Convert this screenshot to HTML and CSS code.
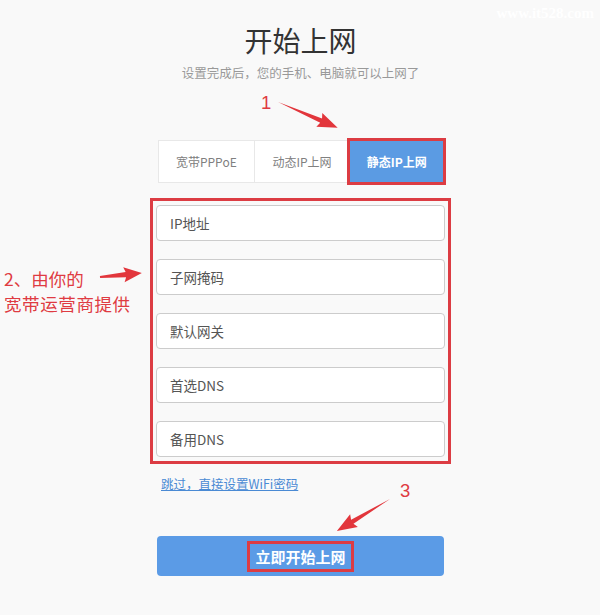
FILE: index.html
```html
<!DOCTYPE html>
<html lang="zh">
<head>
<meta charset="utf-8">
<title>开始上网</title>
<link rel="stylesheet" href="styles.css">
</head>
<body>
<div class="page">
  <div class="watermark">www.it528.com</div>
  <div class="column">
    <h1 class="title">开始上网</h1>
    <p class="subtitle">设置完成后，您的手机、电脑就可以上网了</p>
    <div class="tabs">
      <div class="tab">宽带PPPoE</div>
      <div class="tab">动态IP上网</div>
      <div class="tab tab-active">静态IP上网</div>
    </div>
    <div class="fields">
      <div class="field">IP地址</div>
      <div class="field">子网掩码</div>
      <div class="field">默认网关</div>
      <div class="field">首选DNS</div>
      <div class="field">备用DNS</div>
    </div>
    <a class="skip" href="#">跳过，直接设置WiFi密码</a>
    <div class="submit"><span class="submit-label">立即开始上网</span></div>
  </div>

  <div class="note note-1">1</div>
  <div class="note note-2"><div>2、由你的</div><div>宽带运营商提供</div></div>
  <div class="note note-3">3</div>
  <svg class="arrows" width="600" height="615" viewBox="0 0 600 615">
    <g fill="#e2363c">
      <polygon transform="translate(278,102) rotate(23.4)" points="0,0 47,-2.3 45,-7.5 65,0 45,7.5 47,2.3"/>
      <polygon transform="translate(100,277) rotate(-5.4)" points="0,-1 26,-2.6 24,-7.5 42,0 24,7.5 26,2.6 0,1"/>
      <polygon transform="translate(390,499) rotate(149)" points="0,0 44,-2.3 42,-7.5 62,0 42,7.5 44,2.3"/>
    </g>
  </svg>
</div>
</body>
</html>
```

FILE: styles.css
```css
* { box-sizing: border-box; }

html, body {
  margin: 0;
  padding: 0;
  background: #f9f9f9;
}

body {
  font-family: "Noto Sans CJK SC", "Noto Sans", sans-serif;
  color: #333;
}

.page {
  position: relative;
  width: 600px;
  height: 615px;
  overflow: hidden;
}

.watermark {
  position: absolute;
  right: 6px;
  top: 5px;
  font-family: "Liberation Serif", serif;
  font-size: 15px;
  font-weight: bold;
  color: #ffffff;
}

.column {
  width: 289px;
  margin-left: 156px;
  padding-top: 20px;
  display: flex;
  flex-direction: column;
}

.title {
  margin: 0;
  font-size: 28px;
  line-height: 40px;
  font-weight: normal;
  text-align: center;
  color: #333;
}

.subtitle {
  margin: 3px -20px 0;
  font-size: 12.5px;
  line-height: 20px;
  text-align: center;
  color: #999;
}

.tabs {
  margin: 57px 1px 0 2px;
  height: 43px;
  display: flex;
  background: #fff;
  border: 1px solid #e8e8e8;
}

.tab {
  flex: 1;
  display: flex;
  align-items: center;
  justify-content: center;
  font-size: 12px;
  color: #808080;
  border-left: 1px solid #e8e8e8;
}

.tab:first-child { border-left: 0; }

.tab-active {
  margin: -1px -1px -1px 0;
  background: #5b9be3;
  color: #fff;
  font-weight: bold;
  border-left: 0;
  outline: 3px solid #dc3c43;
  outline-offset: -1px;
}

.fields {
  margin: 15px -6px 0;
  padding: 4px 3px 4px;
  border: 3px solid #dc3c43;
  display: flex;
  flex-direction: column;
  gap: 18px;
}

.field {
  height: 36px;
  background: #fff;
  border: 1px solid #cccccc;
  border-radius: 4px;
  padding-left: 13px;
  display: flex;
  align-items: center;
  font-size: 13.5px;
  color: #555;
}

.skip {
  align-self: flex-start;
  margin: 10px 0 0 5px;
  font-size: 12.5px;
  line-height: 20px;
  color: #4a8ad4;
  text-decoration: underline;
}

.submit {
  margin: 42px 1px 0 1px;
  height: 40px;
  background: #5b9be6;
  border-radius: 4px;
  display: flex;
  align-items: center;
  justify-content: center;
}

.submit-label {
  padding: 0 5px;
  height: 31px;
  display: flex;
  align-items: center;
  font-size: 15px;
  font-weight: bold;
  color: #fff;
  border: 3px solid #dc3c43;
}

.note {
  position: absolute;
  color: #df3b42;
  font-size: 18.5px;
  line-height: 23px;
}

.note-1 {
  left: 261px;
  top: 91px;
  font-family: "Liberation Sans", sans-serif;
}

.note-2 {
  left: 4px;
  top: 266px;
  font-size: 17.5px;
  line-height: 25px;
  display: flex;
  flex-direction: column;
}

.note-2 div:last-child {
  letter-spacing: 0.6px;
}

.note-3 {
  left: 400px;
  top: 479px;
  font-family: "Liberation Sans", sans-serif;
}

.arrows {
  position: absolute;
  left: 0;
  top: 0;
  pointer-events: none;
}
```
